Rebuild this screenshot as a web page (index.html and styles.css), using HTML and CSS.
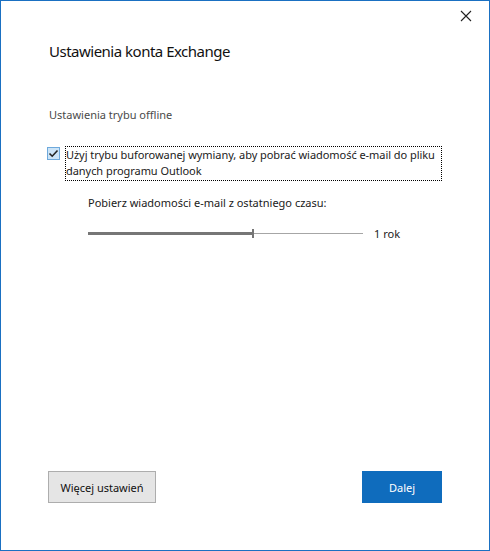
FILE: index.html
```html
<!DOCTYPE html>
<html lang="pl">
<head>
<meta charset="utf-8">
<title>Ustawienia konta Exchange</title>
<link rel="stylesheet" href="styles.css">
</head>
<body>
<div class="dialog">
  <div class="titlebar">
    <span class="close" aria-label="Zamknij">
      <svg width="12" height="12" viewBox="0 0 12 12"><path d="M1 1 L11 11 M11 1 L1 11" stroke="#222" stroke-width="1.1" fill="none"/></svg>
    </span>
  </div>
  <div class="content">
    <h1 class="title">Ustawienia konta Exchange</h1>
    <div class="section-label">Ustawienia trybu offline</div>
    <div class="check-row">
      <span class="checkbox">
        <svg width="11" height="11" viewBox="0 0 11 11"><path d="M1.5 5.5 L4.2 8.2 L9.5 2.5" stroke="#222" stroke-width="1.6" fill="none"/></svg>
      </span>
      <span class="check-label">Użyj trybu buforowanej wymiany, aby pobrać wiadomość e-mail do pliku danych programu Outlook</span>
    </div>
    <div class="range-block">
      <div class="range-label">Pobierz wiadomości e-mail z ostatniego czasu:</div>
      <div class="range-row">
        <div class="slider">
          <span class="fill"></span>
          <span class="thumb"></span>
          <span class="rest"></span>
        </div>
        <span class="range-value">1 rok</span>
      </div>
    </div>
    <div class="buttons">
      <button class="btn btn-secondary">Więcej ustawień</button>
      <button class="btn btn-primary">Dalej</button>
    </div>
  </div>
</div>
</body>
</html>
```
FILE: styles.css
```css
* { box-sizing: border-box; }
html, body {
  margin: 0;
  padding: 0;
  background: #fff;
}
body {
  font-family: "Segoe UI", "Noto Sans", "Open Sans", sans-serif;
  color: #000;
}
.dialog {
  width: 490px;
  height: 551px;
  border: 1px solid #1a70c2;
  background: #fff;
  display: flex;
  flex-direction: column;
}
.titlebar {
  height: 30px;
  display: flex;
  justify-content: flex-end;
  align-items: center;
  padding-right: 17px;
}
.close {
  width: 12px;
  height: 12px;
  display: flex;
}
.content {
  flex: 1;
  display: flex;
  flex-direction: column;
  padding: 0 47px 47px 46px;
}
.title {
  margin: 9px 0 0 2px;
  font-size: 15px;
  font-weight: normal;
  line-height: 22px;
  letter-spacing: -0.5px;
  color: #111;
}
.section-label {
  margin: 45px 0 0 2px;
  font-size: 11px;
  line-height: 16px;
  color: #4a4a4a;
}
.check-row {
  margin-top: 23px;
  display: flex;
  align-items: flex-start;
}
.checkbox {
  width: 13px;
  height: 13px;
  margin-top: 1px;
  margin-right: 5px;
  background: #cce4f7;
  border: 1px solid #6ea9dc;
  display: flex;
  align-items: center;
  justify-content: center;
}
.check-label {
  width: 377px;
  border: 1px dotted #000;
  font-size: 11px;
  line-height: 16px;
  letter-spacing: -0.05px;
  color: #1a1a1a;
  padding: 0 0 1px 0;
}
.range-block {
  margin-left: 41px;
  margin-top: 14px;
}
.range-label {
  font-size: 11px;
  line-height: 16px;
  color: #1a1a1a;
}
.range-row {
  margin-top: 15px;
  display: flex;
  align-items: center;
}
.slider {
  width: 275px;
  height: 10px;
  display: flex;
  align-items: center;
}
.fill {
  width: 164px;
  height: 3px;
  background: #767676;
}
.thumb {
  width: 2px;
  height: 9px;
  background: #767676;
}
.rest {
  flex: 1;
  height: 1px;
  background: #a6a6a6;
}
.range-value {
  margin-left: 11px;
  font-size: 11px;
  color: #1a1a1a;
}
.buttons {
  margin-top: auto;
  display: flex;
  justify-content: space-between;
  padding-left: 1px;
}
.btn {
  height: 32px;
  font-family: inherit;
  font-size: 11px;
  border-radius: 0;
  padding: 0;
  cursor: default;
}
.btn-secondary {
  width: 108px;
  background: #e5e5e5;
  border: 1px solid #adadad;
  color: #111;
}
.btn-primary {
  width: 80px;
  background: #0f6cbd;
  border: 1px solid #0f6cbd;
  color: #fff;
}
```
